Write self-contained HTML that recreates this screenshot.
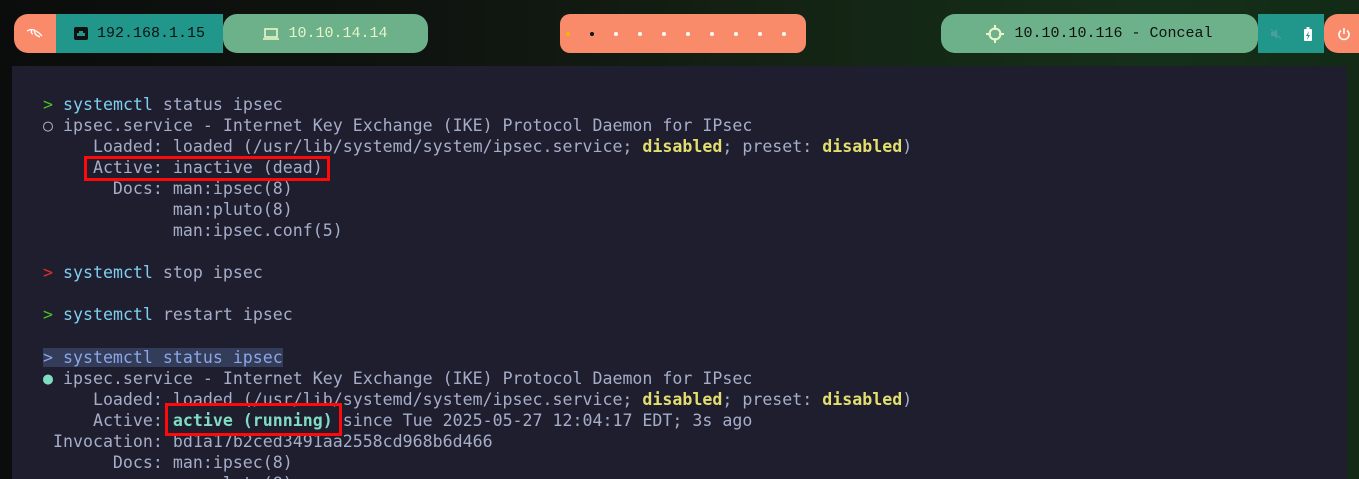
<!DOCTYPE html>
<html><head><meta charset="utf-8"><style>
*{margin:0;padding:0;box-sizing:border-box}
html{width:1359px;height:479px;overflow:hidden}
body{width:1359px;height:479px;overflow:hidden;background:linear-gradient(90deg,#0b0d0c 0%,#101510 35%,#142414 60%,#15301a 85%,#122a16 100%);position:relative;font-family:"DejaVu Sans Mono","Liberation Mono",monospace}
.b{position:absolute;top:14px;height:39px;display:flex;align-items:center;justify-content:center;font-size:15px;font-family:"Liberation Mono",monospace;color:#111}
.term{position:absolute;left:12px;top:66px;width:1335px;height:413px;background:#1e1e2e}
pre{position:absolute;left:43px;top:94px;font-family:"DejaVu Sans Mono",monospace;font-size:16.6px;line-height:21.05px;color:#a6adc8}
.g{color:#4cc21f}.r{color:#e0302a}.c{color:#7fcff0}.y{color:#e3df6e;font-weight:bold}.t{color:#80dcc3}.tb{color:#80dcc3;font-weight:bold}
.hl{background:#333c58;color:#8ca6e6}
.box{position:absolute;border:3px solid #ff0a0a}
.dot{position:absolute;top:32px;width:4px;height:4px;border-radius:50%;background:#fff}
</style></head><body>
<div class="b" style="left:14px;width:42px;background:#f98a6a;border-radius:14px 0 0 14px;color:#fff;font-size:14px">
<svg width="18" height="12" viewBox="0 0 18 12"><path d="M1 3 Q6 0 10 3 L13 5 L16 8 M8 3 L10 7 L14 9 M6 2 Q4 5 7 6" stroke="#fff" stroke-width="1.3" fill="none"/></svg></div>
<div class="b" style="left:56px;width:167px;background:#21968b;"><svg width="14" height="13" viewBox="0 0 14 13" style="margin-right:9px"><rect width="14" height="13" rx="2" fill="#111"/><path d="M3 9V6h2V4h4v2h2v3z" fill="#21968b"/></svg>192.168.1.15</div>
<div class="b" style="left:223px;width:205px;background:#6cb189;border-radius:14px;color:#e9f5c9"><svg width="16" height="12" viewBox="0 0 16 12" style="margin-right:9px"><rect x="2" y="1" width="12" height="8" stroke="#e9f5c9" stroke-width="1.6" fill="none"/><path d="M0 11h16" stroke="#e9f5c9" stroke-width="1.6"/></svg>10.10.14.14</div>
<div class="b" style="left:560px;width:246px;background:#f98a6a;border-radius:10px"></div>
<div class="dot" style="left:566px;background:#f5b400"></div>
<div class="dot" style="left:590px;background:#111"></div>
<div class="dot" style="left:614px"></div><div class="dot" style="left:638px"></div><div class="dot" style="left:662px"></div><div class="dot" style="left:686px"></div><div class="dot" style="left:710px"></div><div class="dot" style="left:734px"></div><div class="dot" style="left:758px"></div><div class="dot" style="left:782px"></div>
<div class="b" style="left:941px;width:317px;background:#6cb189;border-radius:14px"><svg width="18" height="18" viewBox="0 0 18 18" style="margin-right:10px"><circle cx="9" cy="9" r="5.5" stroke="#e9f5c9" stroke-width="2" fill="none"/><path d="M9 0v5M9 13v5M0 9h5M13 9h5" stroke="#e9f5c9" stroke-width="2"/></svg>10.10.10.116 - Conceal</div>
<div class="b" style="left:1258px;width:66px;background:#21968b"><svg width="12" height="12" viewBox="0 0 12 12" style="margin-right:22px"><path d="M1 4h3l3-3v10L4 8H1z" fill="#4a9f98"/><path d="M1 1l10 10" stroke="#4a9f98" stroke-width="1.2"/></svg><svg width="8" height="14" viewBox="0 0 8 14"><rect x="0" y="2" width="8" height="12" rx="1" fill="#fff"/><rect x="2.5" y="0" width="3" height="2" fill="#fff"/><path d="M5 4L2 9h2l-1 4 3-5H4z" fill="#21968b"/></svg></div>
<div class="b" style="left:1324px;width:40px;background:#f98a6a;border-radius:14px 0 0 14px"><svg width="14" height="14" viewBox="0 0 14 14"><path d="M4 3.5A5 5 0 1 0 10 3.5" stroke="#fff" stroke-width="1.6" fill="none"/><path d="M7 1v6" stroke="#fff" stroke-width="1.6"/></svg></div>
<div class="term"></div>
<pre><span class="g">&gt;</span> <span class="c">systemctl</span> status ipsec
○ ipsec.service - Internet Key Exchange (IKE) Protocol Daemon for IPsec
     Loaded: loaded (/usr/lib/systemd/system/ipsec.service; <span class="y">disabled</span>; preset: <span class="y">disabled</span>)
     Active: inactive (dead)
       Docs: man:ipsec(8)
             man:pluto(8)
             man:ipsec.conf(5)

<span class="r">&gt;</span> <span class="c">systemctl</span> stop ipsec

<span class="g">&gt;</span> <span class="c">systemctl</span> restart ipsec

<span class="hl">&gt; systemctl status ipsec</span>
<span class="t">●</span> ipsec.service - Internet Key Exchange (IKE) Protocol Daemon for IPsec
     Loaded: loaded (/usr/lib/systemd/system/ipsec.service; <span class="y">disabled</span>; preset: <span class="y">disabled</span>)
     Active: <span class="tb">active (running)</span> since Tue 2025-05-27 12:04:17 EDT; 3s ago
 Invocation: bd1a17b2ced3491aa2558cd968b6d466
       Docs: man:ipsec(8)
             man:pluto(8)</pre>
<div class="box" style="left:84px;top:156px;width:246px;height:25px"></div>
<div class="box" style="left:165px;top:403px;width:177px;height:33px"></div>
</body></html>
